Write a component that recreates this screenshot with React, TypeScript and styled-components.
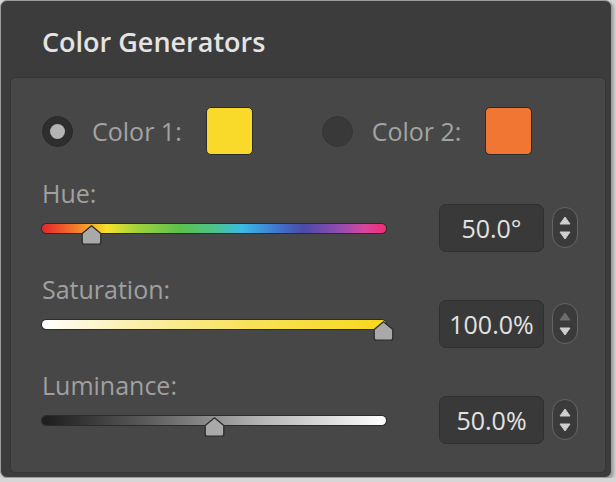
import React from "react";
import styled, { createGlobalStyle } from "styled-components";

const GlobalStyle = createGlobalStyle`
    html, body {
        margin: 0;
        padding: 0;
        background: #d6d6d6;
    }
    body {
        font-family: "Open Sans", "Noto Sans", sans-serif;
    }
`;

const HUE_GRADIENT =
    "linear-gradient(90deg, #e5262c 0%, #f2742a 9%, #f6e02c 19%, #9fd23c 28%, #5cc04c 40%, #4cc28a 50%, #3cbbe6 58%, #3f78cf 68%, #4b4aa8 76%, #8f4cb0 86%, #d8469c 94%, #f42a78 100%)";

const Frame = styled.div`
    box-sizing: border-box;
    width: 612px;
    height: 478px;
    background: #3c3c3c;
    border: 1.5px solid #9c9c9c;
    border-radius: 7px;
    box-shadow: 2px 2px 3px rgba(0, 0, 0, 0.25);
    display: flex;
    flex-direction: column;
    overflow: hidden;
`;

const Header = styled.h1`
    margin: 0;
    height: 76px;
    padding: 4px 0 0 41px;
    box-sizing: border-box;
    display: flex;
    align-items: center;
    font-size: 27px;
    font-weight: 600;
    color: #e4e4e4;
`;

const Panel = styled.div`
    box-sizing: border-box;
    margin: 0 5px 4px 9px;
    flex: 1;
    background: #474747;
    border: 1px solid #353535;
    border-radius: 5px;
    padding: 29px 0 0 31px;
    display: flex;
    flex-direction: column;
    gap: 26px;
`;

const ColorRow = styled.div`
    display: flex;
    align-items: center;
    gap: 69px;
    height: 48px;
    margin-bottom: 1px;
`;

const ColorOption = styled.div`
    display: flex;
    align-items: center;
`;

const Radio = styled.div<{ $checked?: boolean }>`
    box-sizing: border-box;
    width: 31px;
    height: 31px;
    border-radius: 50%;
    background: ${(p) => (p.$checked ? "#2e2e2e" : "#393939")};
    border: 1px solid ${(p) => (p.$checked ? "#2a2a2a" : "#363636")};
    display: flex;
    align-items: center;
    justify-content: center;
    margin-right: 19px;

    &::after {
        content: "";
        display: ${(p) => (p.$checked ? "block" : "none")};
        width: 15px;
        height: 15px;
        border-radius: 50%;
        background: #b4b4b4;
    }
`;

const OptionLabel = styled.span`
    font-size: 25px;
    color: #a3a3a3;
    margin-right: 24px;
`;

const Swatch = styled.div<{ $color: string }>`
    box-sizing: border-box;
    width: 47px;
    height: 48px;
    border-radius: 5px;
    background: ${(p) => p.$color};
    border: 1.5px solid #2b2b2b;
`;

const SliderBlock = styled.div`
    display: flex;
    align-items: flex-end;
`;

const SliderColumn = styled.div`
    width: 344px;
    margin-right: 53px;
    display: flex;
    flex-direction: column;
`;

const Label = styled.div`
    font-size: 25px;
    line-height: 22px;
    color: #a0a0a0;
`;

const TrackArea = styled.div`
    position: relative;
    height: 48px;
    display: flex;
    align-items: center;
`;

const Track = styled.div<{ $background: string }>`
    width: 100%;
    height: 9px;
    border-radius: 5px;
    background: ${(p) => p.$background};
    box-shadow: 0 0 0 1px rgba(20, 20, 20, 0.55);
`;

const Thumb = styled.svg`
    position: absolute;
    top: 21px;
    width: 21px;
    height: 20px;
    margin-left: -10.5px;
`;

const ValueBox = styled.div`
    box-sizing: border-box;
    width: 105px;
    height: 48px;
    border-radius: 7px;
    background: #393939;
    border: 1px solid #2f2f2f;
    display: flex;
    align-items: center;
    justify-content: center;
    font-size: 25px;
    color: #e2e2e2;
    margin-right: 8px;
`;

const Stepper = styled.div`
    box-sizing: border-box;
    width: 26px;
    height: 41px;
    margin-bottom: 4px;
    border-radius: 13px;
    border: 1.5px solid #656565;
    background: #3b3b3b;
    display: flex;
    flex-direction: column;
    align-items: center;
    justify-content: center;
    gap: 6px;
`;

const Arrow = styled.svg`
    width: 12px;
    height: 9px;
    display: block;
`;

function ThumbIcon({ fraction }: { fraction: number }) {
    return (
        <Thumb
            viewBox="0 0 21 20"
            style={{ left: `${3 + fraction * 338}px` }}
        >
            <path
                d="M10.5 0.8 L19.8 8.6 L19.8 17 Q19.8 19.2 17.6 19.2 L3.4 19.2 Q1.2 19.2 1.2 17 L1.2 8.6 Z"
                fill="#a9a9a9"
                stroke="#2c2c2c"
                strokeWidth="1.3"
                strokeLinejoin="round"
            />
        </Thumb>
    );
}

function StepperIcon({ upDisabled }: { upDisabled?: boolean }) {
    return (
        <Stepper>
            <Arrow viewBox="0 0 12 9">
                <path
                    d="M6 1 L11 8 L1 8 Z"
                    fill={upDisabled ? "#6c6c6c" : "#cfcfcf"}
                    stroke={upDisabled ? "#6c6c6c" : "#cfcfcf"}
                    strokeWidth="1"
                    strokeLinejoin="round"
                />
            </Arrow>
            <Arrow viewBox="0 0 12 9">
                <path
                    d="M1 1 L11 1 L6 8 Z"
                    fill="#cfcfcf"
                    stroke="#cfcfcf"
                    strokeWidth="1"
                    strokeLinejoin="round"
                />
            </Arrow>
        </Stepper>
    );
}

interface SliderProps {
    label: string;
    value: string;
    fraction: number;
    background: string;
    upDisabled?: boolean;
}

function Slider({ label, value, fraction, background, upDisabled }: SliderProps) {
    return (
        <SliderBlock>
            <SliderColumn>
                <Label>{label}</Label>
                <TrackArea>
                    <Track $background={background} />
                    <ThumbIcon fraction={fraction} />
                </TrackArea>
            </SliderColumn>
            <ValueBox>{value}</ValueBox>
            <StepperIcon upDisabled={upDisabled} />
        </SliderBlock>
    );
}

export default function App() {
    return (
        <>
            <GlobalStyle />
            <Frame>
                <Header>Color Generators</Header>
                <Panel>
                    <ColorRow>
                        <ColorOption>
                            <Radio $checked />
                            <OptionLabel>Color 1:</OptionLabel>
                            <Swatch $color="#f9da2b" />
                        </ColorOption>
                        <ColorOption>
                            <Radio />
                            <OptionLabel>Color 2:</OptionLabel>
                            <Swatch $color="#f27633" />
                        </ColorOption>
                    </ColorRow>
                    <Slider
                        label="Hue:"
                        value="50.0°"
                        fraction={50 / 360}
                        background={HUE_GRADIENT}
                    />
                    <Slider
                        label="Saturation:"
                        value="100.0%"
                        fraction={1}
                        background="linear-gradient(90deg, #ffffff 0%, #fbf0b0 25%, #f8e25a 60%, #f7d81c 100%)"
                        upDisabled
                    />
                    <Slider
                        label="Luminance:"
                        value="50.0%"
                        fraction={0.5}
                        background="linear-gradient(90deg, #1c1c1c 0%, #5a5a5a 30%, #b8b8b8 65%, #ffffff 100%)"
                    />
                </Panel>
            </Frame>
        </>
    );
}
